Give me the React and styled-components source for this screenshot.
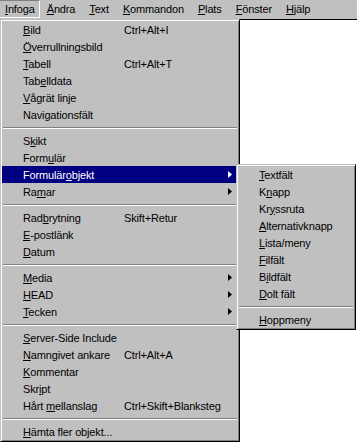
import React from "react";
import styled, { createGlobalStyle } from "styled-components";

const GlobalStyle = createGlobalStyle`
  html, body {
    margin: 0;
    padding: 0;
    background: #fff;
  }
  body {
    font-family: "Liberation Sans", Arial, sans-serif;
    font-size: 11px;
    letter-spacing: -0.15px;
    -webkit-font-smoothing: none;
  }
`;

const Window = styled.div`
  position: relative;
  width: 357px;
  height: 444px;
  overflow: hidden;
  background: #fff;
  display: flex;
  flex-direction: column;
`;

const MenuBar = styled.div`
  height: 19px;
  flex-shrink: 0;
  background: #c0c0c0;
  display: flex;
  align-items: flex-start;
`;

const BarItem = styled.div`
  height: 16px;
  line-height: 16px;
  padding: 0 6px;
  border: 1px solid transparent;
  border-color: ${(p) => (p.$open ? "#808080 #fff #fff #808080" : "transparent")};
  color: #000;
  white-space: nowrap;

  &:first-child {
    margin-left: -2px;
    padding-right: 4px;
  }
`;

const Document = styled.div`
  flex: 1;
  background: #fff;
  border-top: 1px solid #000;
`;

const Dropdown = styled.div`
  position: absolute;
  left: ${(p) => p.$x}px;
  top: ${(p) => p.$y}px;
  width: ${(p) => p.$w}px;
  box-sizing: border-box;
  background: #c0c0c0;
  border: 1px solid;
  border-color: #c0c0c0 #000 #000 #c0c0c0;
  box-shadow: inset 1px 1px #fff, inset -1px -1px #808080;
  padding: 1px;
`;

const Row = styled.div`
  display: flex;
  align-items: center;
  height: 17px;
  padding: 0 6px 0 21px;
  background: ${(p) => (p.$active ? "#000080" : "transparent")};
  color: ${(p) => (p.$active ? "#fff" : "#000")};
  white-space: nowrap;
`;

const Label = styled.span`
  flex: ${(p) => (p.$width ? `0 0 ${p.$width}px` : "1 1 auto")};
`;

const Shortcut = styled.span`
  flex: 1 1 auto;
`;

const Key = styled.u`
  text-decoration-thickness: 1px;
  text-underline-offset: 1px;
`;

const Arrow = styled.svg`
  margin-left: auto;
  flex-shrink: 0;
  fill: currentColor;
`;

const Separator = styled.div`
  height: 9px;
  box-sizing: border-box;
  padding: 4px 1px 0;

  &::before {
    content: "";
    display: block;
    border-top: 1px solid #808080;
    border-bottom: 1px solid #fff;
  }
`;

function Mnemonic({ text }) {
  const i = text.indexOf("&");
  if (i < 0) return text;
  return (
    <>
      {text.slice(0, i)}
      <Key>{text[i + 1]}</Key>
      {text.slice(i + 2)}
    </>
  );
}

const barItems = ["&Infoga", "&Ändra", "&Text", "&Kommandon", "&Plats", "&Fönster", "&Hjälp"];

const insertMenu = [
  { l: "&Bild", s: "Ctrl+Alt+I" },
  { l: "&Överrullningsbild" },
  { l: "&Tabell", s: "Ctrl+Alt+T" },
  { l: "Tab&elldata" },
  { l: "&Vågrät linje" },
  { l: "Navigationsfält" },
  "-",
  { l: "S&kikt" },
  { l: "Form&ulär" },
  { l: "Formulär&objekt", arrow: true, active: true },
  { l: "Ra&mar", arrow: true },
  "-",
  { l: "Rad&brytning", s: "Skift+Retur" },
  { l: "&E-postlänk" },
  { l: "&Datum" },
  "-",
  { l: "&Media", arrow: true },
  { l: "&HEAD", arrow: true },
  { l: "&Tecken", arrow: true },
  "-",
  { l: "&Server-Side Include" },
  { l: "&Namngivet ankare", s: "Ctrl+Alt+A" },
  { l: "&Kommentar" },
  { l: "Skr&ipt" },
  { l: "Hårt &mellanslag", s: "Ctrl+Skift+Blanksteg" },
  "-",
  { l: "&Hämta fler objekt..." },
];

const formMenu = [
  { l: "&Textfält" },
  { l: "K&napp" },
  { l: "Kr&yssruta" },
  { l: "&Alternativknapp" },
  { l: "&Lista/meny" },
  { l: "&Filfält" },
  { l: "B&ildfält" },
  { l: "&Dolt fält" },
  "-",
  { l: "&Hoppmeny" },
];

function Menu({ items, x, y, w, labelWidth }) {
  return (
    <Dropdown $x={x} $y={y} $w={w}>
      {items.map((it, i) =>
        it === "-" ? (
          <Separator key={i} />
        ) : (
          <Row key={i} $active={it.active}>
            <Label $width={it.s ? labelWidth : 0}>
              <Mnemonic text={it.l} />
            </Label>
            {it.s && <Shortcut>{it.s}</Shortcut>}
            {it.arrow && (
              <Arrow width="4" height="7" viewBox="0 0 4 7">
                <polygon points="0,0 4,3.5 0,7" />
              </Arrow>
            )}
          </Row>
        )
      )}
    </Dropdown>
  );
}

export default function App() {
  return (
    <>
      <GlobalStyle />
      <Window>
        <MenuBar>
          {barItems.map((t, i) => (
            <BarItem key={t} $open={i === 0}>
              <Mnemonic text={t} />
            </BarItem>
          ))}
        </MenuBar>
        <Document />
        <Menu items={insertMenu} x={0} y={19} w={240} labelWidth={101} />
        <Menu items={formMenu} x={236} y={164} w={120} />
      </Window>
    </>
  );
}
